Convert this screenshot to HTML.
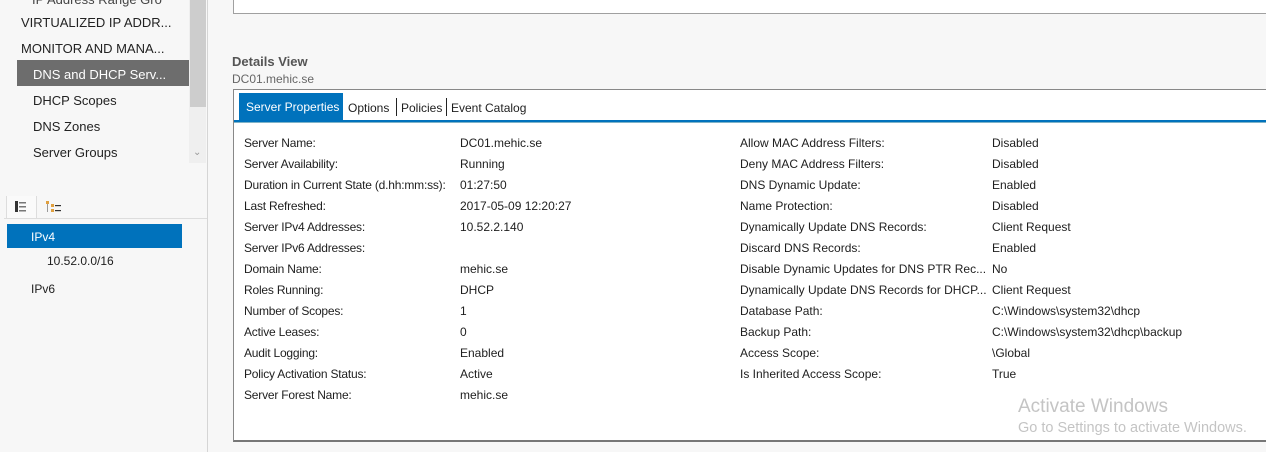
<!DOCTYPE html>
<html><head><meta charset="utf-8"><style>
*{margin:0;padding:0;box-sizing:border-box}
body{width:1266px;height:452px;background:#f7f7f7;font-family:"Liberation Sans",sans-serif;color:#1e1e1e;position:relative;overflow:hidden;font-size:12px}
.a{position:absolute;white-space:nowrap}
.nav{font-size:13px;color:#222}
</style></head><body>
<div class="a" style="left:0;top:0;width:208px;height:452px;background:#f7f7f7;border-right:1px solid #d5d5d5"></div>
<div class="a" style="left:189px;top:0;width:17px;height:163px;background:#efefef"></div>
<div class="a" style="left:190px;top:0;width:16px;height:107px;background:#cdcdcd"></div>
<div class="a" style="left:193px;top:147px;font-size:10px;color:#999">&#8964;</div>
<div class="a nav" style="left:32px;top:-8px;color:#444">IP Address Range Gro</div>
<div class="a nav" style="left:21px;top:15px">VIRTUALIZED IP ADDR...</div>
<div class="a nav" style="left:21px;top:41px">MONITOR AND MANA...</div>
<div class="a" style="left:17px;top:60px;width:172px;height:26px;background:#6d6d6d"></div>
<div class="a nav" style="left:33px;top:67px;color:#fff">DNS and DHCP Serv...</div>
<div class="a nav" style="left:33px;top:93px">DHCP Scopes</div>
<div class="a nav" style="left:33px;top:119px">DNS Zones</div>
<div class="a nav" style="left:33px;top:145px">Server Groups</div>
<div class="a" style="left:6px;top:196px;width:31px;height:23px;border-left:1px solid #ddd;border-right:1px solid #ddd;background:#fafafa"></div>
<div class="a" style="left:4px;top:218px;width:203px;height:1px;background:#ddd"></div>
<svg class="a" style="left:15px;top:201px" width="12" height="11"><rect x="0" y="0" width="3" height="11" fill="#333"/><rect x="4" y="1" width="7" height="1.5" fill="#777"/><rect x="4" y="5" width="7" height="1.5" fill="#777"/><rect x="4" y="9" width="7" height="1.5" fill="#777"/></svg>
<svg class="a" style="left:46px;top:201px" width="16" height="12"><rect x="0" y="0" width="3" height="3" fill="#e0a040"/><rect x="5" y="3" width="3" height="3" fill="#e0a040"/><rect x="5" y="8" width="3" height="3" fill="#e0a040"/><rect x="9" y="4" width="6" height="1.2" fill="#333"/><rect x="9" y="9" width="6" height="1.2" fill="#333"/><rect x="1" y="3" width="1" height="8" fill="#999"/></svg>
<div class="a" style="left:7px;top:224px;width:175px;height:24px;background:#0072bc"></div>
<div class="a" style="left:31px;top:230px;color:#fff">IPv4</div>
<div class="a" style="left:47px;top:254px">10.52.0.0/16</div>
<div class="a" style="left:31px;top:282px">IPv6</div>
<div class="a" style="left:233px;top:-2px;width:1040px;height:16px;background:#fff;border:1px solid #a0a0a0"></div>
<div class="a" style="left:232px;top:54px;font-size:13px;font-weight:bold;color:#555">Details View</div>
<div class="a" style="left:232px;top:72px;font-size:12px;color:#666">DC01.mehic.se</div>
<div class="a" style="left:233px;top:89px;width:1040px;height:353px;background:#fff;border:1px solid #888;border-bottom:2px solid #777"></div>
<div class="a" style="left:239px;top:93px;width:104px;height:28px;background:#0072bc"></div>
<div class="a" style="left:234px;top:120px;width:1032px;height:2px;background:#0072bc"></div>
<div class="a" style="left:234px;top:122px;width:1032px;height:1px;background:#7fb3c8"></div>
<div class="a" style="left:246px;top:100px;color:#fff">Server Properties</div>
<div class="a" style="left:348px;top:101px">Options</div>
<div class="a" style="left:396px;top:98px;width:1px;height:18px;background:#222"></div>
<div class="a" style="left:401px;top:101px">Policies</div>
<div class="a" style="left:446px;top:98px;width:1px;height:18px;background:#222"></div>
<div class="a" style="left:451px;top:101px">Event Catalog</div>
<div class="a" style="left:244px;top:133px;line-height:21px;letter-spacing:-0.2px">Server Name:<br>Server Availability:<br>Duration in Current State (d.hh:mm:ss):<br>Last Refreshed:<br>Server IPv4 Addresses:<br>Server IPv6 Addresses:<br>Domain Name:<br>Roles Running:<br>Number of Scopes:<br>Active Leases:<br>Audit Logging:<br>Policy Activation Status:<br>Server Forest Name:</div>
<div class="a" style="left:460px;top:133px;line-height:21px">DC01.mehic.se<br>Running<br>01:27:50<br>2017-05-09 12:20:27<br>10.52.2.140<br>&nbsp;<br>mehic.se<br>DHCP<br>1<br>0<br>Enabled<br>Active<br>mehic.se</div>
<div class="a" style="left:740px;top:133px;line-height:21px">Allow MAC Address Filters:<br>Deny MAC Address Filters:<br>DNS Dynamic Update:<br>Name Protection:<br>Dynamically Update DNS Records:<br>Discard DNS Records:<br>Disable Dynamic Updates for DNS PTR Rec...<br>Dynamically Update DNS Records for DHCP...<br>Database Path:<br>Backup Path:<br>Access Scope:<br>Is Inherited Access Scope:</div>
<div class="a" style="left:992px;top:133px;line-height:21px;background:#fff">Disabled<br>Disabled<br>Enabled<br>Disabled<br>Client Request<br>Enabled<br>No<br>Client Request<br>C:\Windows\system32\dhcp<br>C:\Windows\system32\dhcp\backup<br>\Global<br>True</div>
<div class="a" style="left:1018px;top:396px;font-size:19px;color:#c4c4c4">Activate Windows</div>
<div class="a" style="left:1018px;top:420px;font-size:14.5px;color:#c4c4c4">Go to Settings to activate Windows.</div>
</body></html>
